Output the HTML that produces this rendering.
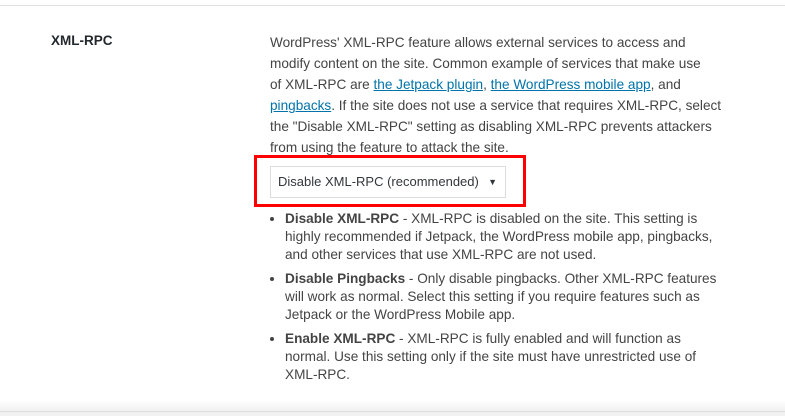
<!DOCTYPE html>
<html><head><style>
body{margin:0;width:785px;height:416px;background:#fff;font-family:"Liberation Sans",sans-serif;color:#444;position:relative;overflow:hidden}
.top{position:absolute;left:0;right:0;top:5px;border-top:1px solid #e1e1e1}
.lbl{position:absolute;left:51px;top:33px;font-weight:bold;font-size:13.5px;color:#23282d}
.p{position:absolute;left:270px;top:32px;font-size:13.6px;line-height:21.1px;white-space:nowrap}
a{color:#0073aa;text-decoration:underline}
.red{position:absolute;left:254px;top:155px;width:266px;height:46px;border:3px solid #f00}
.sel{position:absolute;left:270px;top:166px;width:236px;height:32px;border:1px solid #ddd;box-sizing:border-box;font-size:13px;color:#32373c;line-height:30px;padding-left:7px}
.sel span{position:absolute;right:8px;top:0;font-size:9px}
ul{position:absolute;left:270px;top:210px;margin:0;padding:0 0 0 15px;font-size:13.6px;line-height:18px;white-space:nowrap}
li{margin-bottom:6px}
b{color:#444}
.bot{position:absolute;left:0;right:0;top:400px;height:11px;background:linear-gradient(#fff,#f1f1f1);border-bottom:1px solid #ddd}
.bot2{position:absolute;left:0;right:0;top:412px;height:4px;background:#f1f1f1}
</style></head><body>
<div class="top"></div>
<div class="lbl">XML-RPC</div>
<div class="p">WordPress' XML-RPC feature allows external services to access and<br>modify content on the site. Common example of services that make use<br>of XML-RPC are <a>the Jetpack plugin</a>, <a>the WordPress mobile app</a>, and<br><a>pingbacks</a>. If the site does not use a service that requires XML-RPC, select<br>the "Disable XML-RPC" setting as disabling XML-RPC prevents attackers<br>from using the feature to attack the site.</div>
<div class="red"></div>
<div class="sel">Disable XML-RPC (recommended)<span>▼</span></div>
<ul>
<li><b>Disable XML-RPC</b> - XML-RPC is disabled on the site. This setting is<br>highly recommended if Jetpack, the WordPress mobile app, pingbacks,<br>and other services that use XML-RPC are not used.</li>
<li><b>Disable Pingbacks</b> - Only disable pingbacks. Other XML-RPC features<br>will work as normal. Select this setting if you require features such as<br>Jetpack or the WordPress Mobile app.</li>
<li><b>Enable XML-RPC</b> - XML-RPC is fully enabled and will function as<br>normal. Use this setting only if the site must have unrestricted use of<br>XML-RPC.</li>
</ul>
<div class="bot"></div><div class="bot2"></div>
</body></html>
